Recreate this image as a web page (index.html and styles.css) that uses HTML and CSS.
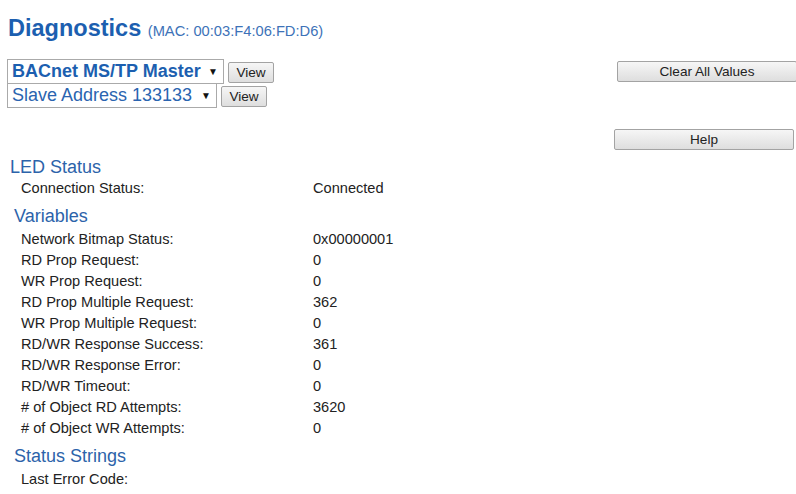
FILE: index.html
```html
<!DOCTYPE html>
<html>
<head>
<title>Diagnostics</title>
<meta http-equiv="Content-Type" content="text/html; charset=utf-8">
<link rel="stylesheet" href="styles.css">
</head>
<body>
<div class="top">
	<div class="left">
		<h1 class="title">Diagnostics <span class="mac">(MAC: 00:03:F4:06:FD:D6)</span></h1>
		<div class="pick">
			<div class="dropdown bold"><span>BACnet MS/TP Master</span><span class="arrow">&#9660;</span></div>
			<div class="btn view">View</div>
		</div>
		<div class="pick">
			<div class="dropdown"><span>Slave Address 133133</span><span class="arrow">&#9660;</span></div>
			<div class="btn view second">View</div>
		</div>
	</div>
	<div class="right">
		<div class="btn wide clear">Clear All Values</div>
		<div class="btn wide help">Help</div>
	</div>
</div>

<div class="section first">LED Status</div>
<div class="row"><span>Connection Status:</span><span>Connected</span></div>

<div class="section vars">Variables</div>
<div class="row"><span>Network Bitmap Status:</span><span>0x00000001</span></div>
<div class="row"><span>RD Prop Request:</span><span>0</span></div>
<div class="row"><span>WR Prop Request:</span><span>0</span></div>
<div class="row"><span>RD Prop Multiple Request:</span><span>362</span></div>
<div class="row"><span>WR Prop Multiple Request:</span><span>0</span></div>
<div class="row"><span>RD/WR Response Success:</span><span>361</span></div>
<div class="row"><span>RD/WR Response Error:</span><span>0</span></div>
<div class="row"><span>RD/WR Timeout:</span><span>0</span></div>
<div class="row"><span># of Object RD Attempts:</span><span>3620</span></div>
<div class="row"><span># of Object WR Attempts:</span><span>0</span></div>

<div class="section strings">Status Strings</div>
<div class="row"><span>Last Error Code:</span><span></span></div>
</body>
</html>
```
FILE: styles.css
```css
body {
	margin: 0;
	padding: 0 0 0 7px;
	background: #fff;
	font-family: "Liberation Sans", Arial, sans-serif;
	color: #222;
	font-size: 14.6px;
}

.top {
	display: flex;
	justify-content: space-between;
}

.title {
	margin: 14px 0 0 1px;
	height: 32px;
	font-size: 23.5px;
	font-weight: bold;
	color: #1c5fb0;
	line-height: 29px;
}
.title .mac {
	font-size: 14.7px;
	font-weight: normal;
	color: #3d72b8;
}

.pick {
	display: flex;
	align-items: flex-start;
}

.dropdown {
	display: flex;
	align-items: center;
	justify-content: space-between;
	box-sizing: border-box;
	height: 25px;
	padding: 0 5px 0 4px;
	border: 1px solid #aaa;
	font-size: 18px;
	color: #2a64b0;
}
.pick:first-of-type .dropdown {
	width: 217px;
	margin-top: 13px;
}
.pick + .pick .dropdown {
	width: 210px;
	margin-top: -1px;
}
.dropdown.bold {
	font-weight: bold;
	color: #1c5fb0;
}
.dropdown .arrow {
	font-size: 10px;
	color: #111;
	margin-left: 6px;
}

.btn {
	box-sizing: border-box;
	display: flex;
	align-items: center;
	justify-content: center;
	height: 21px;
	border: 1px solid #a3a3a3;
	border-radius: 2px;
	background: linear-gradient(#f6f6f6, #dedede);
	font-size: 13.6px;
	color: #222;
}

.view {
	width: 46px;
	margin: 16px 0 0 4px;
}
.view.second {
	margin: 2px 0 0 4px;
}

.right {
	width: 182px;
	padding-top: 61px;
}
.wide {
	width: 180px;
}
.clear {
	margin-left: 3px;
}
.help {
	margin-top: 47px;
}

.section {
	font-size: 18px;
	color: #2c63aa;
	height: 22px;
	line-height: 22px;
}
.section.first {
	margin-top: 6px;
	padding-left: 3px;
}
.section.vars {
	margin-top: 6px;
	padding-left: 7px;
	height: 24px;
}
.section.strings {
	margin-top: 6px;
	padding-left: 7px;
	height: 24px;
}

.row {
	display: grid;
	grid-template-columns: 292px auto;
	height: 21px;
	line-height: 21px;
	padding-left: 14px;
}
```
